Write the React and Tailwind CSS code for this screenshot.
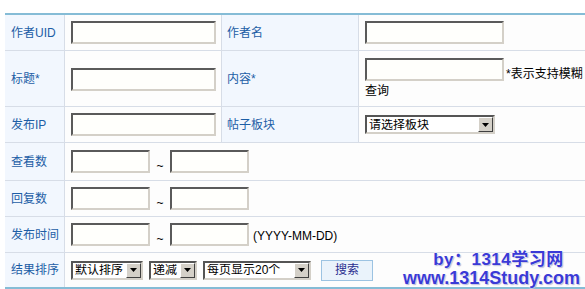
import React from 'react';

const label = 'pl-[6px] flex items-center whitespace-nowrap bg-[#f2f7fe] text-[#1d5ea6] text-[12px]';
const cell = 'px-[6px] flex items-center bg-[#fdfdfd]';

function TextBox({ w = 'w-[145px]' }) {
  return (
    <div className={`${w} shrink-0 h-[23px] bg-[#fffffc] border-2 border-t-[#5a5a5a] border-l-[#5a5a5a] border-r-[#d4d0c8] border-b-[#d4d0c8]`} />
  );
}

function Select({ w, text }) {
  return (
    <div className={`${w} shrink-0 h-[19px] flex items-center bg-white border-2 border-t-[#555] border-l-[#555] border-r-[#d4d0c8] border-b-[#d4d0c8]`}>
      <span className="flex-1 pl-[2px] text-[12px] leading-none text-black whitespace-nowrap overflow-hidden">{text}</span>
      <span className="w-[15px] h-[15px] flex items-center justify-center bg-[#d4d0c8] border border-t-white border-l-white border-r-[#404040] border-b-[#404040]">
        <svg width="7" height="4" viewBox="0 0 7 4"><path d="M0 0h7L3.5 4z" fill="#000" /></svg>
      </span>
    </div>
  );
}

function Range() {
  return (
    <div className="flex items-center">
      <TextBox w="w-[79px]" />
      <span className="w-[20px] pt-[8px] text-center text-[12px] text-black">~</span>
      <TextBox w="w-[79px]" />
    </div>
  );
}

export default function App() {
  return (
    <div className="relative w-[585px] h-[289px] bg-white font-['Liberation_Sans','Noto_Sans_CJK_SC',sans-serif] overflow-hidden">
      <div className="ml-[5px] mt-[13px] border-t-2 border-b-2 border-[#85bcd6]">
        <div className="grid grid-cols-[60px_156px_138px_1fr] [&>div]:border-b [&>div]:border-[#d7dde7]">
          <div className={`${label} h-[36px] border-r`}>作者UID</div>
          <div className={`${cell} h-[36px]`}><TextBox /></div>
          <div className={`${label} h-[36px] border-x !pl-[5px]`}>作者名</div>
          <div className={`${cell} h-[36px]`}><TextBox w="w-[139px]" /></div>

          <div className={`${label} h-[56px] border-r`}>标题*</div>
          <div className={`${cell} h-[56px] pt-[2px]`}><TextBox /></div>
          <div className={`${label} h-[56px] border-x !pl-[5px]`}>内容*</div>
          <div className={`${cell} h-[56px] flex-col !items-start justify-start pt-[7px] !pr-0 text-[12px] text-black`}>
            <div className="flex items-end whitespace-nowrap">
              <TextBox w="w-[139px]" />
              <span className="ml-[2px] leading-[14px]">*表示支持模糊</span>
            </div>
            <span className="leading-[16px] mt-[2px]">查询</span>
          </div>

          <div className={`${label} h-[36px] border-r`}>发布IP</div>
          <div className={`${cell} h-[36px]`}><TextBox /></div>
          <div className={`${label} h-[36px] border-x !pl-[5px]`}>帖子板块</div>
          <div className={`${cell} h-[36px]`}><Select w="w-[130px]" text="请选择板块" /></div>

          <div className={`${label} h-[38px] border-r`}>查看数</div>
          <div className={`${cell} h-[38px] col-span-3`}><Range /></div>

          <div className={`${label} h-[36px] border-r`}>回复数</div>
          <div className={`${cell} h-[36px] col-span-3`}><Range /></div>

          <div className={`${label} h-[36px] border-r`}>发布时间</div>
          <div className={`${cell} h-[36px] col-span-3`}>
            <Range />
            <span className="ml-[4px] pt-[3px] text-[12px] text-black">(YYYY-MM-DD)</span>
          </div>

          <div className={`${label} h-[34px] border-r !border-b-0`}>结果排序</div>
          <div className={`${cell} h-[34px] col-span-3 gap-[6px] !border-b-0`}>
            <Select w="w-[72px]" text="默认排序" />
            <Select w="w-[48px]" text="递减" />
            <Select w="w-[108px]" text="每页显示20个" />
            <button className="ml-[4px] w-[52px] h-[21px] bg-[#eaf3fb] border border-[#9cc3e2] text-[12px] text-[#2b2f8f]">搜索</button>
          </div>
        </div>
      </div>
      <div className="absolute right-[5px] bottom-[1px] flex flex-col items-center font-bold text-[#3a3ad6] [text-shadow:0_0_2px_#fff,0_0_2px_#fff,1px_1px_1px_#9a9ac8]">
        <span className="text-[17px] leading-[19px] ml-[14px] tracking-[0.5px]">by：1314学习网</span>
        <span className="text-[18px] leading-[19px]">www.1314Study.com</span>
      </div>
    </div>
  );
}
